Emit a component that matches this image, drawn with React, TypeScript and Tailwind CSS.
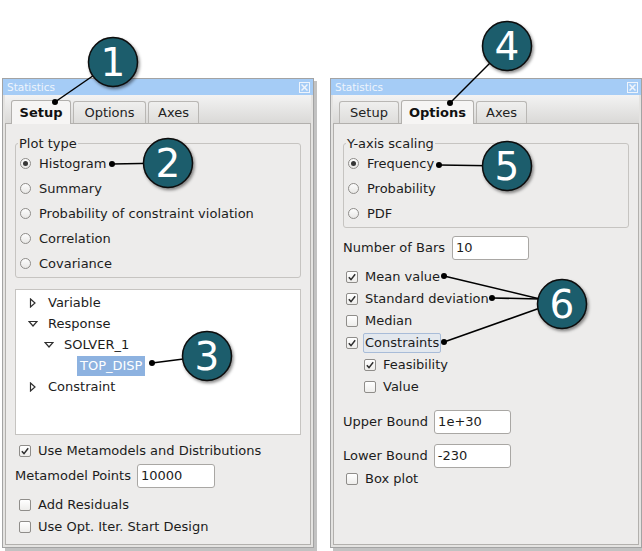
import React from "react";

type Tab = "Setup" | "Options" | "Axes";

const TABS: { name: Tab; w: string }[] = [
	{ name: "Setup", w: "w-[60px]" },
	{ name: "Options", w: "w-[73px]" },
	{ name: "Axes", w: "w-[51px]" },
];

function Radio({ checked }: { checked?: boolean }) {
	return (
		<span className="flex h-[11px] w-[11px] shrink-0 items-center justify-center rounded-full border border-[#8f8d8a] bg-gradient-to-b from-[#fdfdfd] to-[#e8e7e5]">
			{checked && <span className="h-[5px] w-[5px] rounded-full bg-[#363636]" />}
		</span>
	);
}

function Check({ checked }: { checked?: boolean }) {
	return (
		<span className="flex h-[12px] w-[12px] shrink-0 items-center justify-center rounded-[2px] border border-[#8f8d8a] bg-gradient-to-b from-[#ffffff] to-[#eeedeb]">
			{checked && (
				<svg width="10" height="10" viewBox="0 0 10 10">
					<path d="M1.8 5.2 L4 7.6 L8.2 2.2" fill="none" stroke="#2e2e2e" strokeWidth="1.5" />
				</svg>
			)}
		</span>
	);
}

function Arrow({ open }: { open?: boolean }) {
	return open ? (
		<svg width="10" height="10" viewBox="0 0 10 10" className="shrink-0">
			<polygon points="1,2.5 9,2.5 5,7" fill="none" stroke="#2e2e2e" strokeWidth="1.2" />
		</svg>
	) : (
		<svg width="10" height="10" viewBox="0 0 10 10" className="shrink-0">
			<polygon points="2.5,1 7,5 2.5,9" fill="none" stroke="#2e2e2e" strokeWidth="1.2" />
		</svg>
	);
}

function Field({ value, w }: { value: string; w: string }) {
	return (
		<div className={`flex h-[24px] ${w} items-center rounded-[3px] border border-[#a9a7a4] bg-white pl-[3px] text-[13px] text-[#1c1c1c]`}>
			{value}
		</div>
	);
}

function Window({ active, children }: { active: Tab; children: React.ReactNode }) {
	return (
		<div className="flex h-[470px] w-[312px] flex-col border border-[#a3a3a3] bg-[#e4e3e1] shadow-[3px_3px_0_#c2c2c2]">
			<div className="flex h-[16px] items-center justify-between bg-[#a5ccf6] pl-[4px] pr-[3px]">
				<span className="text-[10.5px] leading-none text-[#eef4fc]">Statistics</span>
				<span className="flex h-[11px] w-[11px] items-center justify-center border border-[#eef4fc]">
					<svg width="7" height="7" viewBox="0 0 7 7">
						<path d="M0.5 0.5 L6.5 6.5 M6.5 0.5 L0.5 6.5" stroke="#eef4fc" strokeWidth="1.5" />
					</svg>
				</span>
			</div>
			<div className="flex flex-1 flex-col px-[2px] pb-[2px]">
				<div className="flex h-[29px] items-end gap-[2px] border-b border-[#b2b0ad] bg-gradient-to-b from-[#f3f3f3] to-[#dad9d7] pl-[6px]">
					{TABS.map((t) =>
						t.name === active ? (
							<div
								key={t.name}
								className={`${t.w} -mb-px flex h-[24px] items-center justify-center rounded-t-[3px] border border-b-0 border-[#b2b0ad] bg-[#f6f5f4] text-[13px] font-bold text-[#111]`}
							>
								{t.name}
							</div>
						) : (
							<div
								key={t.name}
								className={`${t.w} flex h-[22px] items-center justify-center rounded-t-[3px] border border-b-0 border-[#b9b7b4] bg-gradient-to-b from-[#efefee] to-[#dedddb] text-[13px] text-[#222]`}
							>
								{t.name}
							</div>
						),
					)}
				</div>
				<div className="flex-1 border border-t-0 border-[#b2b0ad] bg-[#edeceb] px-[9px]">{children}</div>
			</div>
		</div>
	);
}

function Group({ title, items }: { title: string; items: { label: string; checked?: boolean }[] }) {
	return (
		<fieldset className="mt-[12px] rounded-[3px] border border-[#c6c4c1] pb-[1px] pl-[4px]">
			<legend className="-ml-[2px] px-[1px] text-[13px] leading-[15px] text-[#1c1c1c]">{title}</legend>
			{items.map((it) => (
				<div key={it.label} className="flex h-[25px] items-center gap-[8px] text-[13px] text-[#1c1c1c]">
					<Radio checked={it.checked} />
					{it.label}
				</div>
			))}
		</fieldset>
	);
}

function CheckRow({ label, checked, indent, focus }: { label: string; checked?: boolean; indent?: boolean; focus?: boolean }) {
	return (
		<div className={`flex h-[22px] items-center gap-[7px] text-[13px] text-[#1c1c1c] ${indent ? "pl-[21px]" : "pl-[3px]"}`}>
			<Check checked={checked} />
			<span className={focus ? "-ml-[2px] rounded-[2px] border border-[#a8bcd8] bg-[#e3e8ee] px-[1px] leading-[18px]" : ""}>{label}</span>
		</div>
	);
}

function SetupPane() {
	return (
		<div className="flex flex-col">
			<Group
				title="Plot type"
				items={[
					{ label: "Histogram", checked: true },
					{ label: "Summary" },
					{ label: "Probability of constraint violation" },
					{ label: "Correlation" },
					{ label: "Covariance" },
				]}
			/>
			<div className="mt-[11px] h-[146px] border border-[#c6c4c1] bg-white pt-[2px] text-[13px] text-[#1c1c1c]">
				<div className="flex h-[21px] items-center gap-[10px] pl-[12px]">
					<Arrow />
					Variable
				</div>
				<div className="flex h-[21px] items-center gap-[10px] pl-[12px]">
					<Arrow open />
					Response
				</div>
				<div className="flex h-[21px] items-center gap-[10px] pl-[28px]">
					<Arrow open />
					SOLVER_1
				</div>
				<div className="flex h-[21px] items-center pl-[61px]">
					<span className="bg-[#8db2e0] px-[3px] leading-[20px] text-white">TOP_DISP</span>
				</div>
				<div className="flex h-[21px] items-center gap-[10px] pl-[12px]">
					<Arrow />
					Constraint
				</div>
			</div>
			<div className="mt-[6px] flex h-[20px] items-center gap-[7px] pl-[4px] text-[13px] text-[#1c1c1c]">
				<Check checked />
				Use Metamodels and Distributions
			</div>
			<div className="mt-[3px] flex items-center gap-[6px] text-[13px] text-[#1c1c1c]">
				Metamodel Points
				<Field value="10000" w="w-[78px]" />
			</div>
			<div className="mt-[7px] flex h-[20px] items-center gap-[7px] pl-[4px] text-[13px] text-[#1c1c1c]">
				<Check />
				Add Residuals
			</div>
			<div className="mt-[2px] flex h-[20px] items-center gap-[7px] pl-[4px] text-[13px] text-[#1c1c1c]">
				<Check />
				Use Opt. Iter. Start Design
			</div>
		</div>
	);
}

function OptionsPane() {
	return (
		<div className="flex flex-col">
			<Group
				title="Y-axis scaling"
				items={[{ label: "Frequency", checked: true }, { label: "Probability" }, { label: "PDF" }]}
			/>
			<div className="mt-[8px] flex items-center gap-[7px] text-[13px] text-[#1c1c1c]">
				Number of Bars
				<Field value="10" w="w-[77px]" />
			</div>
			<div className="mt-[6px]">
				<CheckRow label="Mean value" checked />
				<CheckRow label="Standard deviation" checked />
				<CheckRow label="Median" />
				<CheckRow label="Constraints" checked focus />
				<CheckRow label="Feasibility" checked indent />
				<CheckRow label="Value" indent />
			</div>
			<div className="mt-[12px] flex items-center gap-[6px] text-[13px] text-[#1c1c1c]">
				Upper Bound
				<Field value="1e+30" w="w-[77px]" />
			</div>
			<div className="mt-[10px] flex items-center gap-[6px] text-[13px] text-[#1c1c1c]">
				Lower Bound
				<Field value="-230" w="w-[77px]" />
			</div>
			<CheckRow label="Box plot" />
		</div>
	);
}

const CALLOUTS = [
	{ n: "1", cx: 113, cy: 62, lines: [[55, 102]] },
	{ n: "2", cx: 168, cy: 163, lines: [[112, 164]] },
	{ n: "3", cx: 207, cy: 356, lines: [[152, 363]] },
	{ n: "4", cx: 507, cy: 46, lines: [[450, 103]] },
	{ n: "5", cx: 507, cy: 166, lines: [[439, 165]] },
	{ n: "6", cx: 562, cy: 304, lines: [[444, 276], [492, 298], [444, 342]] },
];

export default function App() {
	return (
		<div className="relative h-[551px] w-[642px] overflow-hidden bg-white font-['DejaVu_Sans',sans-serif]">
			<div className="flex gap-[16px] pl-[2px] pt-[78px]">
				<Window active="Setup">
					<SetupPane />
				</Window>
				<Window active="Options">
					<OptionsPane />
				</Window>
			</div>
			{/* numbered callouts */}
			<svg className="pointer-events-none absolute inset-0" width="642" height="551">
				<defs>
					<filter id="sh" x="-30%" y="-30%" width="160%" height="160%">
						<feDropShadow dx="1.5" dy="2" stdDeviation="1.5" floodColor="#000" floodOpacity="0.45" />
					</filter>
				</defs>
				{CALLOUTS.map((c) =>
					c.lines.map(([x, y], i) => (
						<g key={c.n + i}>
							<line x1={x} y1={y} x2={c.n === "6" ? 540 : c.cx} y2={c.n === "6" ? (i === 2 ? 308 : 299) : c.cy} stroke="#000" strokeWidth="1.5" />
							<circle cx={x} cy={y} r="3" fill="#000" />
						</g>
					)),
				)}
				{CALLOUTS.map((c) => (
					<g key={c.n}>
						<circle cx={c.cx} cy={c.cy} r="24.5" fill="#1d5d6c" stroke="#0b0b0b" strokeWidth="1.5" filter="url(#sh)" />
						<text x={c.cx} y={c.cy + 14} textAnchor="middle" fontSize="39" fill="#fff" fontFamily="DejaVu Sans, sans-serif">
							{c.n}
						</text>
					</g>
				))}
			</svg>
		</div>
	);
}
